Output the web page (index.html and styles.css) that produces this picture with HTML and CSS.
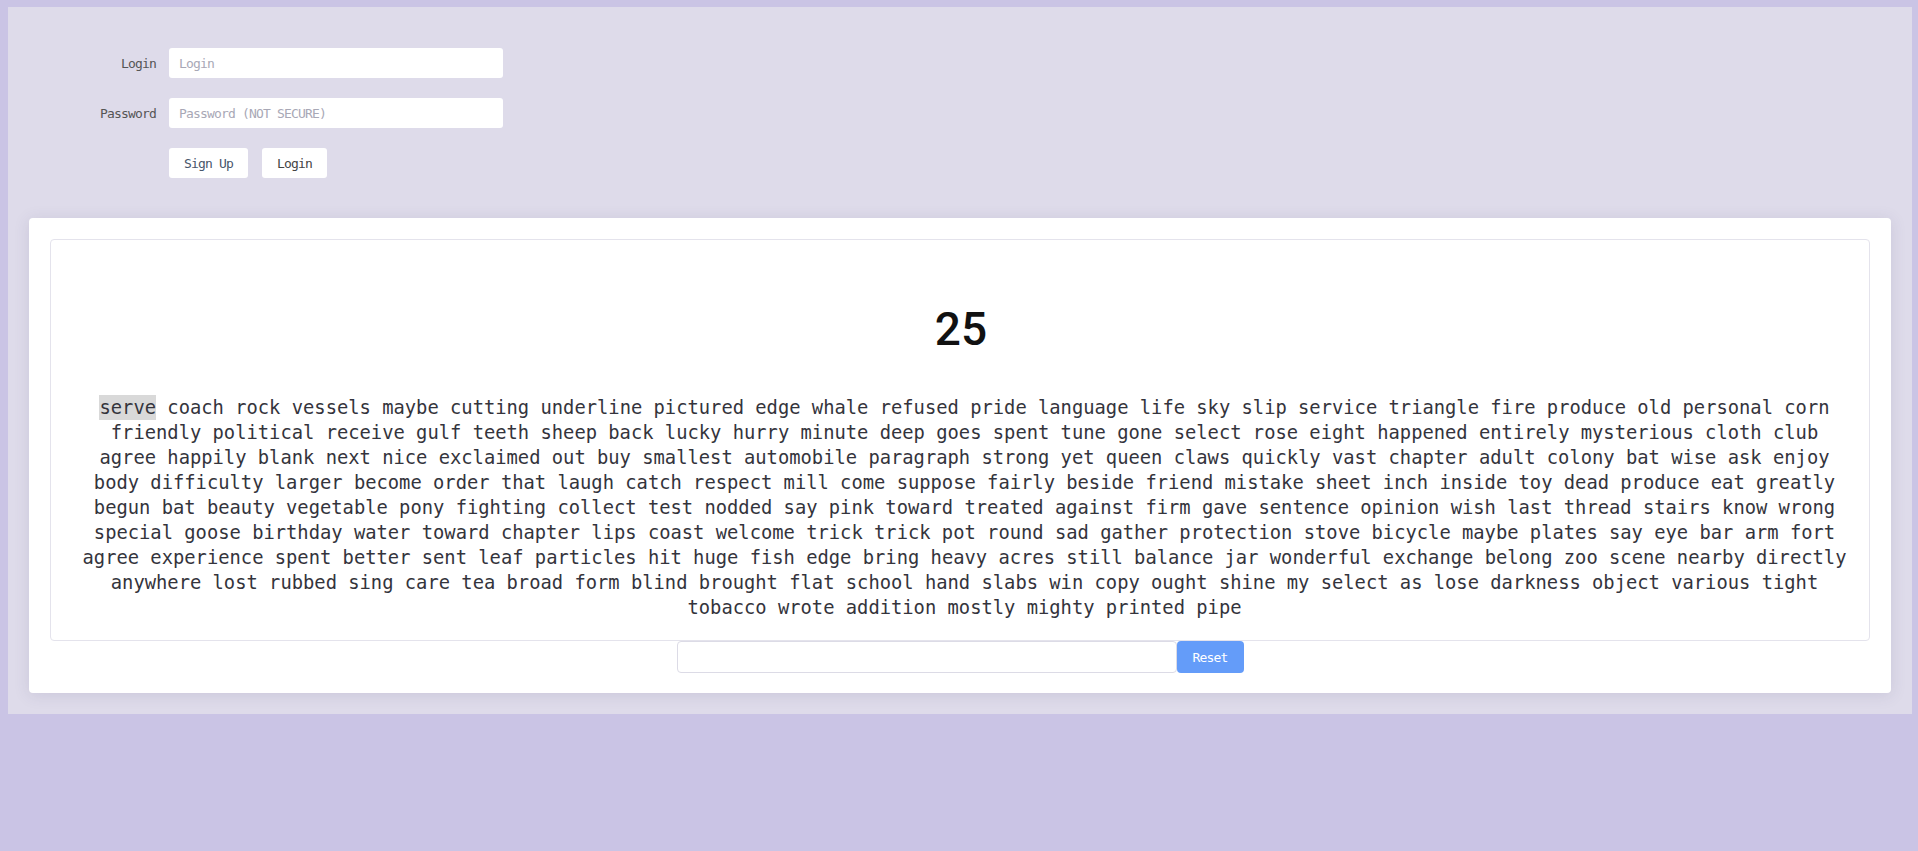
FILE: index.html
```html
<!DOCTYPE html>
<html lang="en">
<head>
<meta charset="utf-8">
<title>Typing test</title>
<link rel="stylesheet" href="styles.css">
</head>
<body>
<div class="app">
  <form class="auth">
    <label class="auth-label" for="login">Login</label>
    <input class="auth-input" id="login" type="text" placeholder="Login">
    <label class="auth-label" for="password">Password</label>
    <input class="auth-input" id="password" type="password" placeholder="Password (NOT SECURE)">
    <div class="auth-buttons">
      <button type="button" class="btn btn-signup">Sign Up</button>
      <button type="button" class="btn btn-login">Login</button>
    </div>
  </form>

  <section class="card">
    <div class="test-box">
      <div class="timer">25</div>
      <p class="words"><span class="current">serve</span> coach rock vessels maybe cutting underline pictured edge whale refused pride language life sky slip service triangle fire produce old personal corn friendly political receive gulf teeth sheep back lucky hurry minute deep goes spent tune gone select rose eight happened entirely mysterious cloth club agree happily blank next nice exclaimed out buy smallest automobile paragraph strong yet queen claws quickly vast chapter adult colony bat wise ask enjoy body difficulty larger become order that laugh catch respect mill come suppose fairly beside friend mistake sheet inch inside toy dead produce eat greatly begun bat beauty vegetable pony fighting collect test nodded say pink toward treated against firm gave sentence opinion wish last thread stairs know wrong special goose birthday water toward chapter lips coast welcome trick trick pot round sad gather protection stove bicycle maybe plates say eye bar arm fort agree experience spent better sent leaf particles hit huge fish edge bring heavy acres still balance jar wonderful exchange belong zoo scene nearby directly anywhere lost rubbed sing care tea broad form blind brought flat school hand slabs win copy ought shine my select as lose darkness object various tight tobacco wrote addition mostly mighty printed pipe</p>
    </div>
    <div class="entry">
      <input class="entry-input" type="text" aria-label="Type here">
      <button type="button" class="entry-reset">Reset</button>
    </div>
  </section>
</div>
</body>
</html>
```

FILE: styles.css
```css
* { box-sizing: border-box; }

html, body {
  margin: 0;
  background: #cac4e5;
}

body {
  padding: 7px 6px 0 8px;
  font-family: "DejaVu Sans Mono", "Liberation Mono", monospace;
}

.app {
  background: #dedbea;
  padding: 41px 21px 21px;
}

.auth {
  display: grid;
  grid-template-columns: 127px 334px;
  grid-auto-rows: 30px;
  column-gap: 13px;
  row-gap: 20px;
  margin: 0 0 40px;
}

.auth-label {
  align-self: center;
  justify-self: end;
  font-size: 13px;
  letter-spacing: -0.83px;
  color: #555;
}

.auth-input {
  height: 30px;
  border: none;
  border-radius: 3px;
  background: #fff;
  padding: 0 10px;
  font-family: inherit;
  font-size: 13px;
  letter-spacing: -0.83px;
  color: #333;
  outline: none;
}

.auth-input::placeholder {
  color: #a8a8b6;
}

.auth-buttons {
  grid-column: 2;
  display: flex;
  gap: 14px;
}

.btn {
  height: 30px;
  border: none;
  border-radius: 3px;
  background: #fff;
  padding: 0;
  font-family: inherit;
  font-size: 13px;
  letter-spacing: -0.83px;
  color: #444;
}

.btn-signup {
  width: 79px;
  color: #47566b;
}

.btn-login {
  width: 65px;
}

.card {
  background: #fff;
  border-radius: 4px;
  box-shadow: 0 2px 16px rgba(70, 60, 110, 0.13);
  padding: 21px 21px 20px;
}

.test-box {
  border: 1px solid #e4e3ec;
  border-radius: 4px;
  padding: 62px 21px 20px 23px;
}

.timer {
  font-family: Roboto, "Liberation Sans", sans-serif;
  font-weight: 500;
  font-size: 46px;
  line-height: 54px;
  color: #111;
  text-align: center;
  margin-bottom: 39px;
}

.words {
  margin: 0;
  width: 1776px;
  padding-left: 5px;
  font-size: 18.8px;
  line-height: 25px;
  color: #34343c;
  text-align: center;
}

.current {
  background: #d9d9d9;
  padding: 2px 0 2px;
}

.entry {
  display: flex;
  justify-content: center;
}

.entry-input {
  width: 500px;
  height: 32px;
  border: 1px solid #dcdbe6;
  border-radius: 4px;
  background: #fff;
  outline: none;
}

.entry-reset {
  width: 67px;
  height: 32px;
  border: none;
  border-radius: 4px;
  background: #649cf9;
  color: #fff;
  font-family: inherit;
  font-size: 13px;
  letter-spacing: -0.83px;
}
```
